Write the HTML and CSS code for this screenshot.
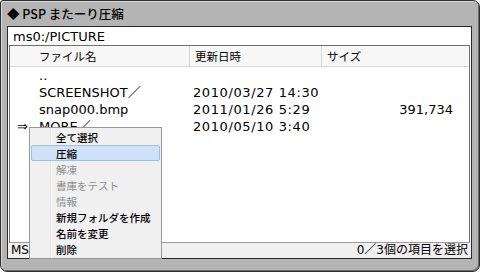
FILE: index.html
```html
<!DOCTYPE html>
<html lang="ja">
<head>
<meta charset="utf-8">
<link rel="stylesheet" href="styles.css">
</head>
<body>
<div class="frame">
  <div class="title">◆ PSP またーり圧縮</div>
  <div class="win">
    <div class="path">ms0:/PICTURE</div>
    <div class="list">
      <div class="head">
        <div class="hc hname">ファイル名</div>
        <div class="hc">更新日時</div>
        <div class="hc">サイズ</div>
      </div>
      <div class="row"><div class="c name"><span class="mark"></span>..</div><div class="c date"></div><div class="c size"></div></div>
      <div class="row"><div class="c name"><span class="mark"></span>SCREENSHOT／</div><div class="c date">2010/03/27 14:30</div><div class="c size"></div></div>
      <div class="row"><div class="c name"><span class="mark"></span>snap000.bmp</div><div class="c date">2011/01/26 5:29</div><div class="c size">391,734</div></div>
      <div class="row"><div class="c name"><span class="mark">⇒</span>MORE／</div><div class="c date">2010/05/10 3:40</div><div class="c size"></div></div>
    </div>
    <div class="status">
      <span class="st-left">MS</span>
      <span class="st-right">0／3個の項目を選択</span>
    </div>
  </div>
  <div class="menu">
    <div class="mi">全て選択</div>
    <div class="mi sel">圧縮</div>
    <div class="mi dis">解凍</div>
    <div class="mi dis">書庫をテスト</div>
    <div class="mi dis">情報</div>
    <div class="mi">新規フォルダを作成</div>
    <div class="mi">名前を変更</div>
    <div class="mi">削除</div>
  </div>
</div>
</body>
</html>
```

FILE: styles.css
```css
html, body {
  margin: 0;
  padding: 0;
  background: #ffffff;
}
body {
  width: 480px;
  height: 272px;
  overflow: hidden;
  font-family: "DejaVu Sans", "Noto Sans CJK JP", sans-serif;
  color: #000;
}
.frame {
  position: relative;
  box-sizing: border-box;
  width: 480px;
  height: 272px;
  border: 1px solid #2e2e2e;
  border-radius: 3px 7px 7px 7px;
  background: #b4b4b4;
  box-shadow: inset 1px 1px 0 #d8d8d8, inset -1px -1px 0 #6e6e6e;
  padding: 0 7px 12px 6px;
  display: flex;
  flex-direction: column;
}
.title {
  height: 25px;
  line-height: 26px;
  padding-left: 0;
  font-family: "Noto Sans CJK JP", sans-serif;
  font-size: 12.5px;
  font-weight: 500;
}
.win {
  box-sizing: border-box;
  height: 233px;
  border: 1px solid #2a2a2a;
  background: #fff;
  display: flex;
  flex-direction: column;
}
.path {
  height: 18px;
  line-height: 19px;
  padding-left: 5px;
  font-size: 13px;
}
.list {
  flex: 1;
  margin: 0 1px;
  border: 1px solid #6f6f6f;
  border-bottom-color: #9a9a9a;
  background: #fff;
}
.head {
  display: grid;
  grid-template-columns: 179px 132px 1fr;
  height: 20px;
  border-bottom: 1px solid #d6d6d6;
  background: #f7f7f7;
  font-family: "Noto Sans CJK JP", sans-serif;
  font-size: 11.5px;
  line-height: 21px;
}
.hc {
  padding-left: 5px;
  border-left: 1px solid #d6d6d6;
}
.hc.hname {
  border-left: none;
  padding-left: 29px;
}
.row {
  display: grid;
  grid-template-columns: 179px 132px 1fr;
  height: 17px;
  line-height: 17px;
  font-size: 13px;
}
.c.name {
  display: flex;
}
.mark {
  width: 29px;
  box-sizing: border-box;
  padding-left: 7px;
}
.c.date {
  padding-left: 4px;
  letter-spacing: 0.6px;
}
.c.size {
  text-align: right;
  padding-right: 16px;
}
.status {
  height: 15px;
  background: #f0f0f0;
  display: flex;
  justify-content: space-between;
  align-items: center;
  padding: 0 3px;
  font-family: "DejaVu Sans", "Noto Sans CJK JP", sans-serif;
  font-size: 12px;
  line-height: 15px;
}
.menu {
  position: absolute;
  left: 28px;
  top: 126px;
  width: 133px;
  box-sizing: border-box;
  border: 1px solid #979797;
  background: linear-gradient(to right, #f0f0f0 20px, #e2e3e3 20px, #e2e3e3 21px, #ffffff 21px, #ffffff 22px, #f0f0f0 22px);
  padding: 1px 1px;
  font-family: "Noto Sans CJK JP", sans-serif;
  font-size: 10.5px;
  font-weight: 500;
}
.mi {
  box-sizing: border-box;
  height: 16px;
  line-height: 16px;
  padding-left: 24px;
  border: 1px solid transparent;
  border-radius: 2px;
}
.mi.sel {
  background: #cfe2f7;
  border-color: #9dc0e6;
}
.mi.dis {
  color: #8d8d8d;
  font-weight: 400;
}
```
